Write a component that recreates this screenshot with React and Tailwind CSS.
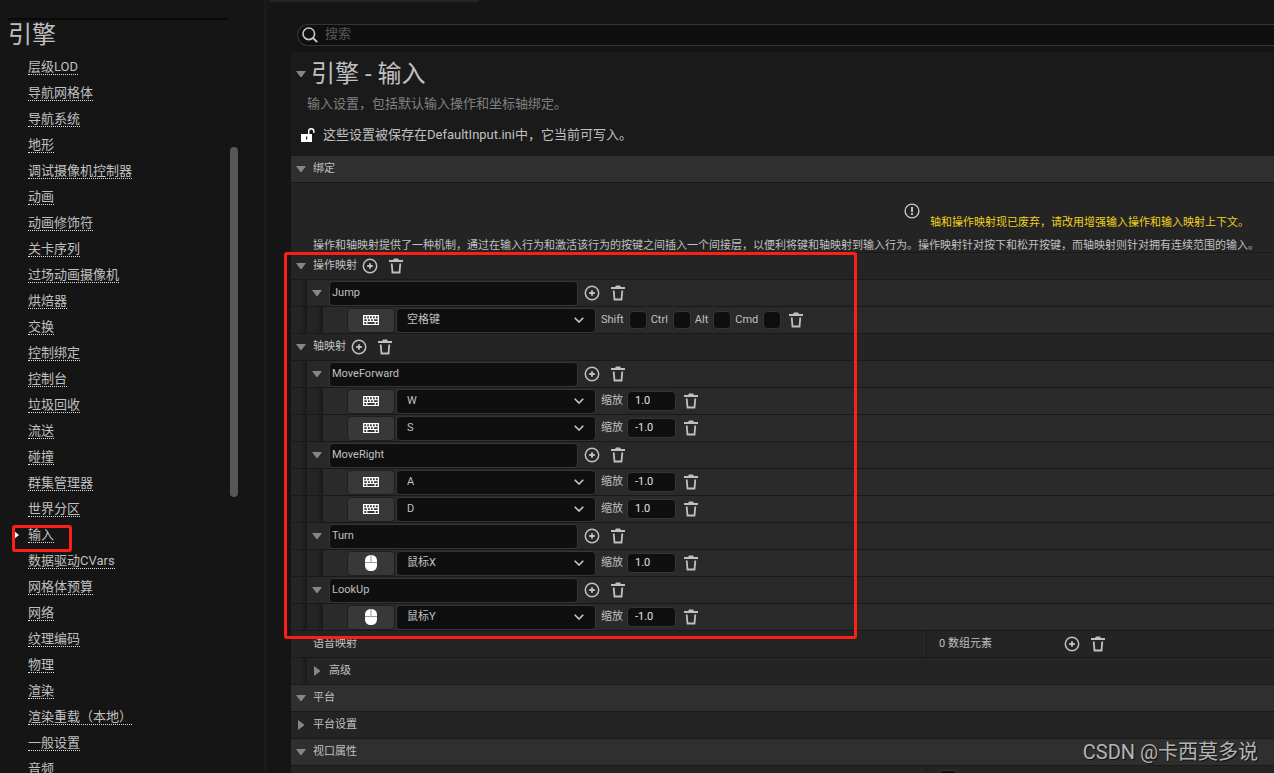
import React, { useState } from 'react'
import clsx from 'clsx'

const sections = [
  '层级LOD', '导航网格体', '导航系统', '地形', '调试摄像机控制器', '动画', '动画修饰符',
  '关卡序列', '过场动画摄像机', '烘焙器', '交换', '控制绑定', '控制台', '垃圾回收', '流送',
  '碰撞', '群集管理器', '世界分区', '输入', '数据驱动CVars', '网格体预算', '网络', '纹理编码',
  '物理', '渲染', '渲染重载（本地）', '一般设置', '音频',
]

const actionMappings = [
  { name: 'Jump', keys: [{ device: 'keyboard', key: '空格键' }] },
]

const axisMappings = [
  {
    name: 'MoveForward',
    keys: [
      { device: 'keyboard', key: 'W', scale: '1.0' },
      { device: 'keyboard', key: 'S', scale: '-1.0' },
    ],
  },
  {
    name: 'MoveRight',
    keys: [
      { device: 'keyboard', key: 'A', scale: '-1.0' },
      { device: 'keyboard', key: 'D', scale: '1.0' },
    ],
  },
  { name: 'Turn', keys: [{ device: 'mouse', key: '鼠标X', scale: '1.0' }] },
  { name: 'LookUp', keys: [{ device: 'mouse', key: '鼠标Y', scale: '-1.0' }] },
]

const keyOptions = ['空格键', 'W', 'A', 'S', 'D', '鼠标X', '鼠标Y']

// Icons

function PlusIcon() {
  return (
    <svg width="16" height="16" viewBox="0 0 16 16" fill="none" stroke="#c0c0c0">
      <circle cx="8" cy="8" r="6.7" strokeWidth="1.5" />
      <path d="M8 5.2v5.6M5.2 8h5.6" strokeWidth="1.8" />
    </svg>
  )
}

function TrashIcon() {
  return (
    <svg width="16" height="16" viewBox="0 0 16 16" fill="none" stroke="#c0c0c0">
      <path d="M1 3h14" strokeWidth="2" />
      <path d="M5 2 6 .5h4L11 2z" fill="#c0c0c0" stroke="none" />
      <path d="M3.7 5.5l.8 9h7l.8-9" strokeWidth="1.8" />
    </svg>
  )
}

function KeyboardIcon() {
  return (
    <svg width="16" height="10" viewBox="0 0 16 10">
      <path d="M0 0h16v10H0z" fill="#fff" />
      <path
        d="M1.3 1.2h1.7v2H1.3zM4.2 1.2h1.7v2H4.2zM7.1 1.2h1.7v2H7.1zM10 1.2h1.7v2H10zM12.9 1.2h1.8v2h-1.8zM1.3 4.2h2.5v1.8H1.3zM5 4.2h1.8V6H5zM8 4.2h1.8V6H8zM11 4.2h3.7V6H11zM1.3 7h1.9v1.9H1.3zM4.4 7h7.2v1.9H4.4zM12.8 7h1.9v1.9h-1.9z"
        fill="#383838"
      />
    </svg>
  )
}

function MouseIcon() {
  return (
    <svg width="12" height="16" viewBox="0 0 12 16">
      <rect width="12" height="16" rx="5.5" fill="#fff" />
      <path d="M0 7.5h12M6 0v7" stroke="#9a9a9a" strokeWidth="1" />
    </svg>
  )
}

function UnlockIcon() {
  return (
    <svg width="16" height="16" viewBox="0 0 16 16" fill="none">
      <path d="M1 7h11v8H1z" fill="#fff" />
      <path d="M8.7 7.5V4.3a2.5 2.5 0 0 1 5.1 0V6" stroke="#fff" strokeWidth="1.4" />
      <path d="M6 9.6h1.2v2.8H6z" fill="#1a1a1a" />
    </svg>
  )
}

function SearchIcon() {
  return (
    <svg width="16" height="16" viewBox="0 0 16 16" fill="none" stroke="#c8c8c8">
      <circle cx="6.8" cy="6.8" r="5.8" strokeWidth="1.6" />
      <path d="M11 11l4.2 4.2" strokeWidth="1.9" />
    </svg>
  )
}

function WarningIcon() {
  return (
    <svg width="16" height="16" viewBox="0 0 16 16" fill="none" stroke="#c8c8c8">
      <circle cx="8" cy="8" r="6.9" strokeWidth="1.4" />
      <path d="M8 3.9v5M8 10.1V12" strokeWidth="1.9" />
    </svg>
  )
}

function Arrow({ open = true }) {
  return (
    <svg width="10" height="10" viewBox="0 0 10 10" fill="#868686" className="shrink-0">
      {open ? <path d="M0 2h10L5.6 8H4.4z" /> : <path d="M2 0v10l6-4.4V4.4z" />}
    </svg>
  )
}

// Building blocks

function IconButton({ label, children }) {
  return (
    <button type="button" aria-label={label} className="flex h-4 w-4 shrink-0 items-center justify-center">
      {children}
    </button>
  )
}

function AddRemove() {
  return (
    <div className="flex items-center gap-[10px]">
      <IconButton label="添加"><PlusIcon /></IconButton>
      <IconButton label="删除"><TrashIcon /></IconButton>
    </div>
  )
}

function Indent() {
  return <div className="w-4 shrink-0 self-stretch bg-linear-to-r from-[#242424] from-60% to-[#1a1a1a]" />
}

function Row({ level = 0, header = false, children }) {
  return (
    <div
      className={clsx(
        'flex h-[27px] items-center border-b border-[#191919]',
        header ? 'bg-[#2f2f2f]' : level === 2 ? 'bg-[#2a2a2a]' : level === 1 ? 'bg-[#282828]' : 'bg-[#242424]'
      )}
    >
      {level > 0 && <Indent />}
      {level > 1 && <Indent />}
      {children}
    </div>
  )
}

function GroupTitle({ open = true, children }) {
  return (
    <button type="button" aria-expanded={open} className="flex items-center gap-[7px] pl-[5px]">
      <Arrow open={open} />
      <span>{children}</span>
    </button>
  )
}

function NameRow({ mapping }) {
  return (
    <Row level={1}>
      <div className="flex items-center gap-[7px] pl-[5px]">
        <Arrow />
        <input
          aria-label="映射名称"
          defaultValue={mapping.name}
          className="h-[25px] w-[249px] rounded border border-[#353535] bg-[#0f0f0f] px-[2px] pb-[2px] outline-none"
        />
      </div>
      <div className="pl-[6px]">
        <AddRemove />
      </div>
    </Row>
  )
}

function KeyRow({ binding }) {
  return (
    <Row level={2}>
      <button
        type="button"
        aria-label="选择按键"
        className="ml-6 flex h-[25px] w-12 items-center justify-center rounded border border-[#1f1f1f] bg-[#383838]"
      >
        {binding.device === 'mouse' ? <MouseIcon /> : <KeyboardIcon />}
      </button>
      <div className="relative ml-px">
        <select
          aria-label="按键"
          defaultValue={binding.key}
          className="block h-[25px] w-[200px] appearance-none rounded border border-[#353535] bg-[#0f0f0f] pb-px pl-[10px] outline-none"
        >
          {keyOptions.map((k) => <option key={k}>{k}</option>)}
        </select>
        <svg
          width="10" height="6" viewBox="0 0 10 6" fill="none" stroke="#c8c8c8" strokeWidth="1.6"
          className="pointer-events-none absolute top-[9px] right-3"
        >
          <path d="M.7.7 5 5 9.3.7" />
        </svg>
      </div>
      {binding.scale ? (
        <label className="flex items-center gap-1 pl-[5px]">
          缩放
          <input
            defaultValue={binding.scale}
            className="h-5 w-[49px] rounded border border-[#353535] bg-[#0f0f0f] px-[7px] pb-[2px] text-[#e0e0e0] outline-none"
          />
        </label>
      ) : (
        <div className="flex items-center gap-1 pl-[5px]">
          {['Shift', 'Ctrl', 'Alt', 'Cmd'].map((mod) => (
            <label key={mod} className="flex items-center gap-[5px]">
              {mod}
              <input
                type="checkbox"
                className="h-[18px] w-[18px] appearance-none rounded border border-[#353535] bg-[#0f0f0f] checked:bg-[#0070e0]"
              />
            </label>
          ))}
        </div>
      )}
      <div className="pl-[7px]">
        <IconButton label="删除"><TrashIcon /></IconButton>
      </div>
    </Row>
  )
}

function MappingGroup({ title, mappings }) {
  return (
    <>
      <Row>
        <GroupTitle>{title}</GroupTitle>
        <div className="pl-[5px]">
          <AddRemove />
        </div>
      </Row>
      {mappings.map((mapping) => (
        <div key={mapping.name}>
          <NameRow mapping={mapping} />
          {mapping.keys.map((binding) => <KeyRow key={binding.key} binding={binding} />)}
        </div>
      ))}
    </>
  )
}

function Sidebar({ active, onSelect }) {
  return (
    <aside className="relative flex w-[264px] shrink-0 flex-col pt-[18px]">
      <div className="mr-9 ml-2 h-[3px] shrink-0 bg-linear-to-b from-[#040404] to-[#151515]" />
      <h2 className="pl-2 text-2xl leading-[28px]">引擎</h2>
      <nav className="pt-[11px]">
        {sections.map((name) => (
          <div key={name} className="relative flex h-[26px] items-start pl-7">
            {name === active && (
              <>
                <div className="absolute top-[3px] left-[14px] border-y-4 border-l-[5px] border-y-transparent border-l-white" />
                <div className="absolute -top-[3px] left-3 h-[27px] w-[60px] rounded-[3px] border-3 border-[#fb1f14]" />
              </>
            )}
            <a
              href="#"
              onClick={() => onSelect(name)}
              className="border-b border-dotted border-[#e0e0e0] text-[13px] leading-[14px]"
            >
              {name}
            </a>
          </div>
        ))}
      </nav>
      <div className="absolute top-[147px] right-[26px] h-[350px] w-2 rounded-full bg-[#575757]" />
    </aside>
  )
}

export default function App() {
  const [active, setActive] = useState('输入')

  return (
    <div className="relative flex h-screen overflow-hidden bg-[#151515] font-[Roboto,'Noto_Sans_CJK_SC',sans-serif] text-[11px] leading-4 text-[#c0c0c0]">
      <Sidebar active={active} onSelect={setActive} />
      <div className="w-[3px] shrink-0 bg-[#1a1a1a]" />

      <main className="min-w-0 flex-1 pl-6">
        <div className="-ml-[22px] h-[2px] w-[210px] bg-[#242424]" />

        {/* Search */}
        <label className="mt-[22px] ml-[6px] flex h-[22px] items-center gap-[7px] rounded-l-full border border-r-0 border-[#353535] bg-[#0f0f0f] pl-1">
          <SearchIcon />
          <input
            type="search"
            placeholder="搜索"
            className="min-w-0 flex-1 bg-transparent pb-[2px] text-[13px] leading-4 outline-none placeholder:text-[#575757]"
          />
        </label>

        <div className="relative mt-[6px]">
          {/* Page title */}
          <header className="h-[104px] bg-[#1a1a1a] pt-[6px]">
            <div className="flex items-center gap-[5px] pl-[5px]">
              <Arrow />
              <h1 className="text-2xl leading-[32px]">引擎 - 输入</h1>
            </div>
            <p className="pt-[6px] pl-4 text-[13px] leading-4 text-[#808080]">输入设置，包括默认输入操作和坐标轴绑定。</p>
            <p className="flex items-center gap-[7px] pt-[15px] pl-[9px] text-[13px] leading-4">
              <UnlockIcon />
              这些设置被保存在DefaultInput.ini中，它当前可写入。
            </p>
          </header>

          <Row header>
            <GroupTitle>绑定</GroupTitle>
          </Row>

          {/* Deprecation notice */}
          <div className="h-[70px] border-b border-[#191919] bg-[#242424] pt-5 pl-[22px] whitespace-nowrap">
            <div className="flex justify-end gap-[10px] pr-[25px]">
              <WarningIcon />
              <p className="pt-3 text-[#f0d01c]">轴和操作映射现已废弃，请改用增强输入操作和输入映射上下文。</p>
            </div>
            <p className="pt-[7px]">
              操作和轴映射提供了一种机制，通过在输入行为和激活该行为的按键之间插入一个间接层，以便利将键和轴映射到输入行为。操作映射针对按下和松开按键，而轴映射则针对拥有连续范围的输入。
            </p>
          </div>

          <MappingGroup title="操作映射" mappings={actionMappings} />
          <MappingGroup title="轴映射" mappings={axisMappings} />

          <Row>
            <div className="w-[635px] pl-[22px]">语音映射</div>
            <div className="flex flex-1 items-center self-stretch border-l border-[#191919] pl-3">
              <span className="w-[125px]">0 数组元素</span>
              <AddRemove />
            </div>
          </Row>
          <div className="flex h-[27px] items-center border-b border-[#191919] bg-[#242424]">
            <Indent />
            <GroupTitle open={false}>高级</GroupTitle>
          </div>
          <Row header>
            <GroupTitle>平台</GroupTitle>
          </Row>
          <Row>
            <GroupTitle open={false}>平台设置</GroupTitle>
          </Row>
          <Row header>
            <GroupTitle>视口属性</GroupTitle>
          </Row>
          <Row>
            <div className="w-[635px] pl-[22px]" />
            <div className="flex flex-1 items-center self-stretch border-l border-[#191919] pl-3">
              <input
                type="checkbox"
                aria-label="视口属性"
                className="h-[18px] w-[18px] appearance-none rounded border border-[#353535] bg-[#0f0f0f]"
              />
            </div>
          </Row>

          {/* Highlight around the mappings */}
          <div className="pointer-events-none absolute top-[200px] -left-[7px] h-[387px] w-[573px] rounded-[3px] border-3 border-[#fb1f14]" />
        </div>
      </main>

      <div className="pointer-events-none absolute right-4 bottom-2 text-xl leading-[26px] text-[#b4b4b4] [text-shadow:1px_1px_1px_#111]">
        CSDN @卡西莫多说
      </div>
    </div>
  )
}
